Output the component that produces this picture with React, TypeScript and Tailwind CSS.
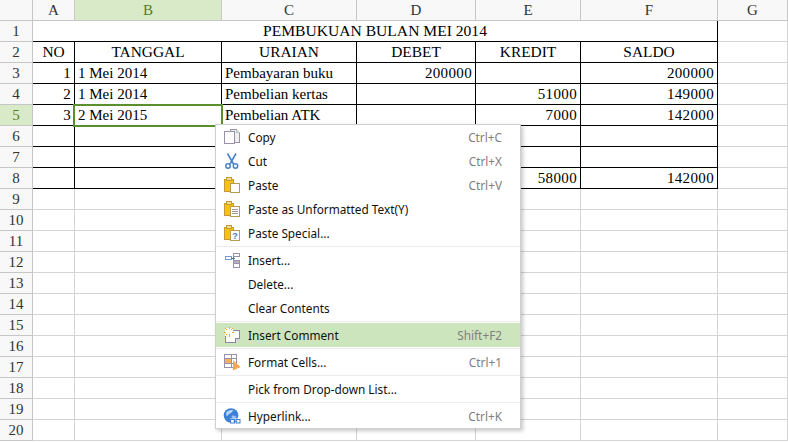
import type { ReactNode } from "react";

const columns = ["A", "B", "C", "D", "E", "F", "G"];

type Cell = { text?: string; right?: boolean; center?: boolean };

const sheet: Cell[][] = [
  [{ text: "NO", center: true }, { text: "TANGGAL", center: true }, { text: "URAIAN", center: true }, { text: "DEBET", center: true }, { text: "KREDIT", center: true }, { text: "SALDO", center: true }],
  [{ text: "1", right: true }, { text: "1 Mei 2014" }, { text: "Pembayaran buku" }, { text: "200000", right: true }, {}, { text: "200000", right: true }],
  [{ text: "2", right: true }, { text: "1 Mei 2014" }, { text: "Pembelian kertas" }, {}, { text: "51000", right: true }, { text: "149000", right: true }],
  [{ text: "3", right: true }, { text: "2 Mei 2015" }, { text: "Pembelian ATK" }, {}, { text: "7000", right: true }, { text: "142000", right: true }],
  [{}, {}, {}, {}, {}, {}],
  [{}, {}, {}, {}, {}, {}],
  [{}, {}, {}, {}, { text: "58000", right: true }, { text: "142000", right: true }],
];

const Svg = ({ children }: { children: ReactNode }) => (
  <svg width="18" height="18" viewBox="0 0 18 18" fill="none" shapeRendering="crispEdges">
    {children}
  </svg>
);

const Clipboard = () => (
  <>
    <rect x="1.5" y="3.5" width="9" height="12" fill="#f6c40e" stroke="#c39a35" />
    <rect x="3.5" y="1.5" width="5" height="3" fill="#f3dc8c" stroke="#c39a35" />
  </>
);

const CopyIcon = () => (
  <Svg>
    <path d="M7.5 3.5V1.5H13.5L16.5 4.5V14.5H12" fill="#eef0ee" stroke="#9c8fa8" />
    <path d="M13.5 1.5V4.5H16.5" fill="#c8d8d0" stroke="#b8c4c0" />
    <rect x="1.5" y="3.5" width="10" height="12" fill="#fff" stroke="#9c8fa8" />
  </Svg>
);

const CutIcon = () => (
  <svg width="18" height="18" viewBox="0 0 18 18" fill="none">
    <path d="M4.5 1.5L10.5 12M13 1.5L7 12" stroke="#4a80cc" strokeWidth="1.6" />
    <circle cx="5" cy="14" r="2.2" stroke="#4a80cc" strokeWidth="1.5" />
    <circle cx="12.5" cy="14" r="2.2" stroke="#4a80cc" strokeWidth="1.5" />
  </svg>
);

const PasteIcon = () => (
  <Svg>
    <Clipboard />
    <rect x="7.5" y="7.5" width="9" height="9" fill="#fff" stroke="#b89b52" />
  </Svg>
);

const PasteTextIcon = () => (
  <Svg>
    <Clipboard />
    <rect x="7.5" y="6.5" width="9" height="10" fill="#fff" stroke="#b89b52" />
    <path d="M9 9.5H15M9 11.5H15M9 13.5H15" stroke="#9a9a9a" />
  </Svg>
);

const PasteSpecialIcon = () => (
  <Svg>
    <Clipboard />
    <rect x="7.5" y="6.5" width="9" height="10" fill="#fff" stroke="#b89b52" />
    <text x="12" y="15" textAnchor="middle" fontSize="9" fontWeight="700" fontFamily="'Liberation Sans', sans-serif" fill="#3f78c8">
      ?
    </text>
  </Svg>
);

const InsertIcon = () => (
  <Svg>
    <rect x="2.5" y="5.5" width="6" height="3" fill="#fff" stroke="#7a98d8" />
    <path d="M8 7.5H12M10.5 6V9" stroke="#3f78c8" />
    <rect x="10.5" y="2.5" width="6" height="3" fill="#fff" stroke="#9c8fa8" />
    <rect x="10.5" y="9.5" width="6" height="3" fill="#b8aec4" stroke="#9c8fa8" />
    <rect x="10.5" y="12.5" width="6" height="4" fill="#fff" stroke="#9c8fa8" />
  </Svg>
);

const CommentIcon = () => (
  <Svg>
    <path d="M2.5 4.5H16.5V12.5L12.5 16.5H2.5Z" fill="#fdfdf8" stroke="#8f86a0" />
    <path d="M12.5 16.5V12.5H16.5" fill="#d8d4e0" stroke="#8f86a0" />
    <rect x="2" y="2" width="8" height="8" fill="#fdfdf8" />
    <path d="M6 1V3M6 8V11M1 6H3M8.5 6H11M2.5 2.5L4 4M9.5 2.5L8 4M2.5 9.5L4 8" stroke="#eda52f" />
  </Svg>
);

const FormatIcon = () => (
  <Svg>
    <rect x="1.5" y="1.5" width="12" height="13" fill="#fff" stroke="#9c8fa8" />
    <path d="M1.5 5.5H13.5M1.5 10.5H13.5M8.5 1.5V14.5" stroke="#9c8fa8" />
    <rect x="2" y="6" width="6" height="4" fill="#f2b35e" />
    <path d="M10 7V17.5L17.5 14Z" fill="#f3a94d" shapeRendering="auto" />
  </Svg>
);

const LinkIcon = () => (
  <svg width="18" height="18" viewBox="0 0 18 18" fill="none">
    <circle cx="8" cy="8.5" r="7.3" fill="#3d80d8" />
    <path d="M3 6C5 3 8.5 2.5 10.5 3.5C9 4.5 8.5 6 7 6.5C5.5 7 5 9 3.5 9Z" fill="#b8d6f5" />
    <path d="M8.5 9C10.5 8 13 9 13.5 10.5C11.5 12 9.5 12.5 8.5 9Z" fill="#9cc4ee" />
    <rect x="7" y="11.5" width="11" height="5.5" fill="#fff" />
    <rect x="7.5" y="12.5" width="4" height="3.5" fill="#fff" stroke="#3d80d8" />
    <rect x="13" y="12.5" width="4" height="3.5" fill="#fff" stroke="#3d80d8" />
    <path d="M10.5 14.2H14.5" stroke="#3d80d8" />
  </svg>
);

type MenuRow = { label: string; hint?: string; icon?: ReactNode; active?: boolean };

const menu: MenuRow[][] = [
  [
    { label: "Copy", hint: "Ctrl+C", icon: <CopyIcon /> },
    { label: "Cut", hint: "Ctrl+X", icon: <CutIcon /> },
    { label: "Paste", hint: "Ctrl+V", icon: <PasteIcon /> },
    { label: "Paste as Unformatted Text(Y)", icon: <PasteTextIcon /> },
    { label: "Paste Special...", icon: <PasteSpecialIcon /> },
  ],
  [
    { label: "Insert...", icon: <InsertIcon /> },
    { label: "Delete..." },
    { label: "Clear Contents" },
  ],
  [{ label: "Insert Comment", hint: "Shift+F2", icon: <CommentIcon />, active: true }],
  [{ label: "Format Cells...", hint: "Ctrl+1", icon: <FormatIcon /> }],
  [{ label: "Pick from Drop-down List..." }],
  [{ label: "Hyperlink...", hint: "Ctrl+K", icon: <LinkIcon /> }],
];

function ContextMenu() {
  return (
    <div className="absolute left-[215px] top-[124px] w-[306px] border border-[#cfcfcf] bg-white font-['Noto_Sans',sans-serif] text-[11.8px] text-[#111111] shadow-[2px_2px_4px_rgba(0,0,0,0.22)]">
      {menu.map((group, i) => (
        <div key={i}>
          {i > 0 && (
            <div className="flex h-[3px] items-start pt-px">
              <div className="h-px w-full bg-[#ececec]" />
            </div>
          )}
          {group.map((row) => (
            <div
              key={row.label}
              className={`flex h-6 items-center ${row.active ? "bg-[#cde5bd]" : ""}`}
            >
              <div className="flex w-8 shrink-0 items-center justify-center">{row.icon}</div>
              <span className="flex-1 pt-[2px]">{row.label}</span>
              {row.hint && <span className="pr-[18px] pt-[2px] text-[#808080]">{row.hint}</span>}
            </div>
          ))}
        </div>
      ))}
    </div>
  );
}

export default function App() {
  const headerCell = "flex items-center justify-center border-r border-b border-[#c6c6c6] bg-[#f8f8f8] text-[#333333]";
  const activeHeader = "flex items-center justify-center border-r border-b border-[#c6c6c6] bg-[#d9eac9] text-[#4f7f2b]";
  const blackCell = "relative flex items-center overflow-hidden whitespace-nowrap border-r border-b border-black px-[3px] text-black";
  const grayCell = "border-r border-b border-[#d4d4d4]";

  return (
    <div className="relative h-[442px] w-[788px] overflow-hidden bg-white font-['Liberation_Serif',serif] text-[15px]">
      <div className="grid grid-cols-[33px_42px_147px_135px_119px_105px_137px_70px] auto-rows-[21px]">
        <div className={headerCell} />
        {columns.map((c) => (
          <div key={c} className={c === "B" ? activeHeader : headerCell}>
            {c}
          </div>
        ))}

        <div className={headerCell}>1</div>
        <div className={`${blackCell} col-span-6 justify-center text-[15.6px]`}>PEMBUKUAN BULAN MEI 2014</div>
        <div className={grayCell} />

        {sheet.map((row, r) => (
          <div key={r} className="contents">
            <div className={r + 2 === 5 ? activeHeader : headerCell}>{r + 2}</div>
            {row.map((cell, c) => (
              <div
                key={c}
                className={`${blackCell} ${cell.center ? "justify-center text-[15.4px]" : cell.right ? "justify-end tracking-[0.35px]" : ""}`}
              >
                {cell.text}
              </div>
            ))}
            <div className={grayCell} />
          </div>
        ))}

        {Array.from({ length: 12 }, (_, i) => (
          <div key={i} className="contents">
            <div className={headerCell}>{i + 9}</div>
            {columns.map((c) => (
              <div key={c} className={grayCell} />
            ))}
          </div>
        ))}
      </div>

      {/* selected cell B5 */}
      <div className="absolute left-[73px] top-[104px] h-[23px] w-[150px] border-2 border-[#5a8f2e]" />

      <ContextMenu />
    </div>
  );
}
